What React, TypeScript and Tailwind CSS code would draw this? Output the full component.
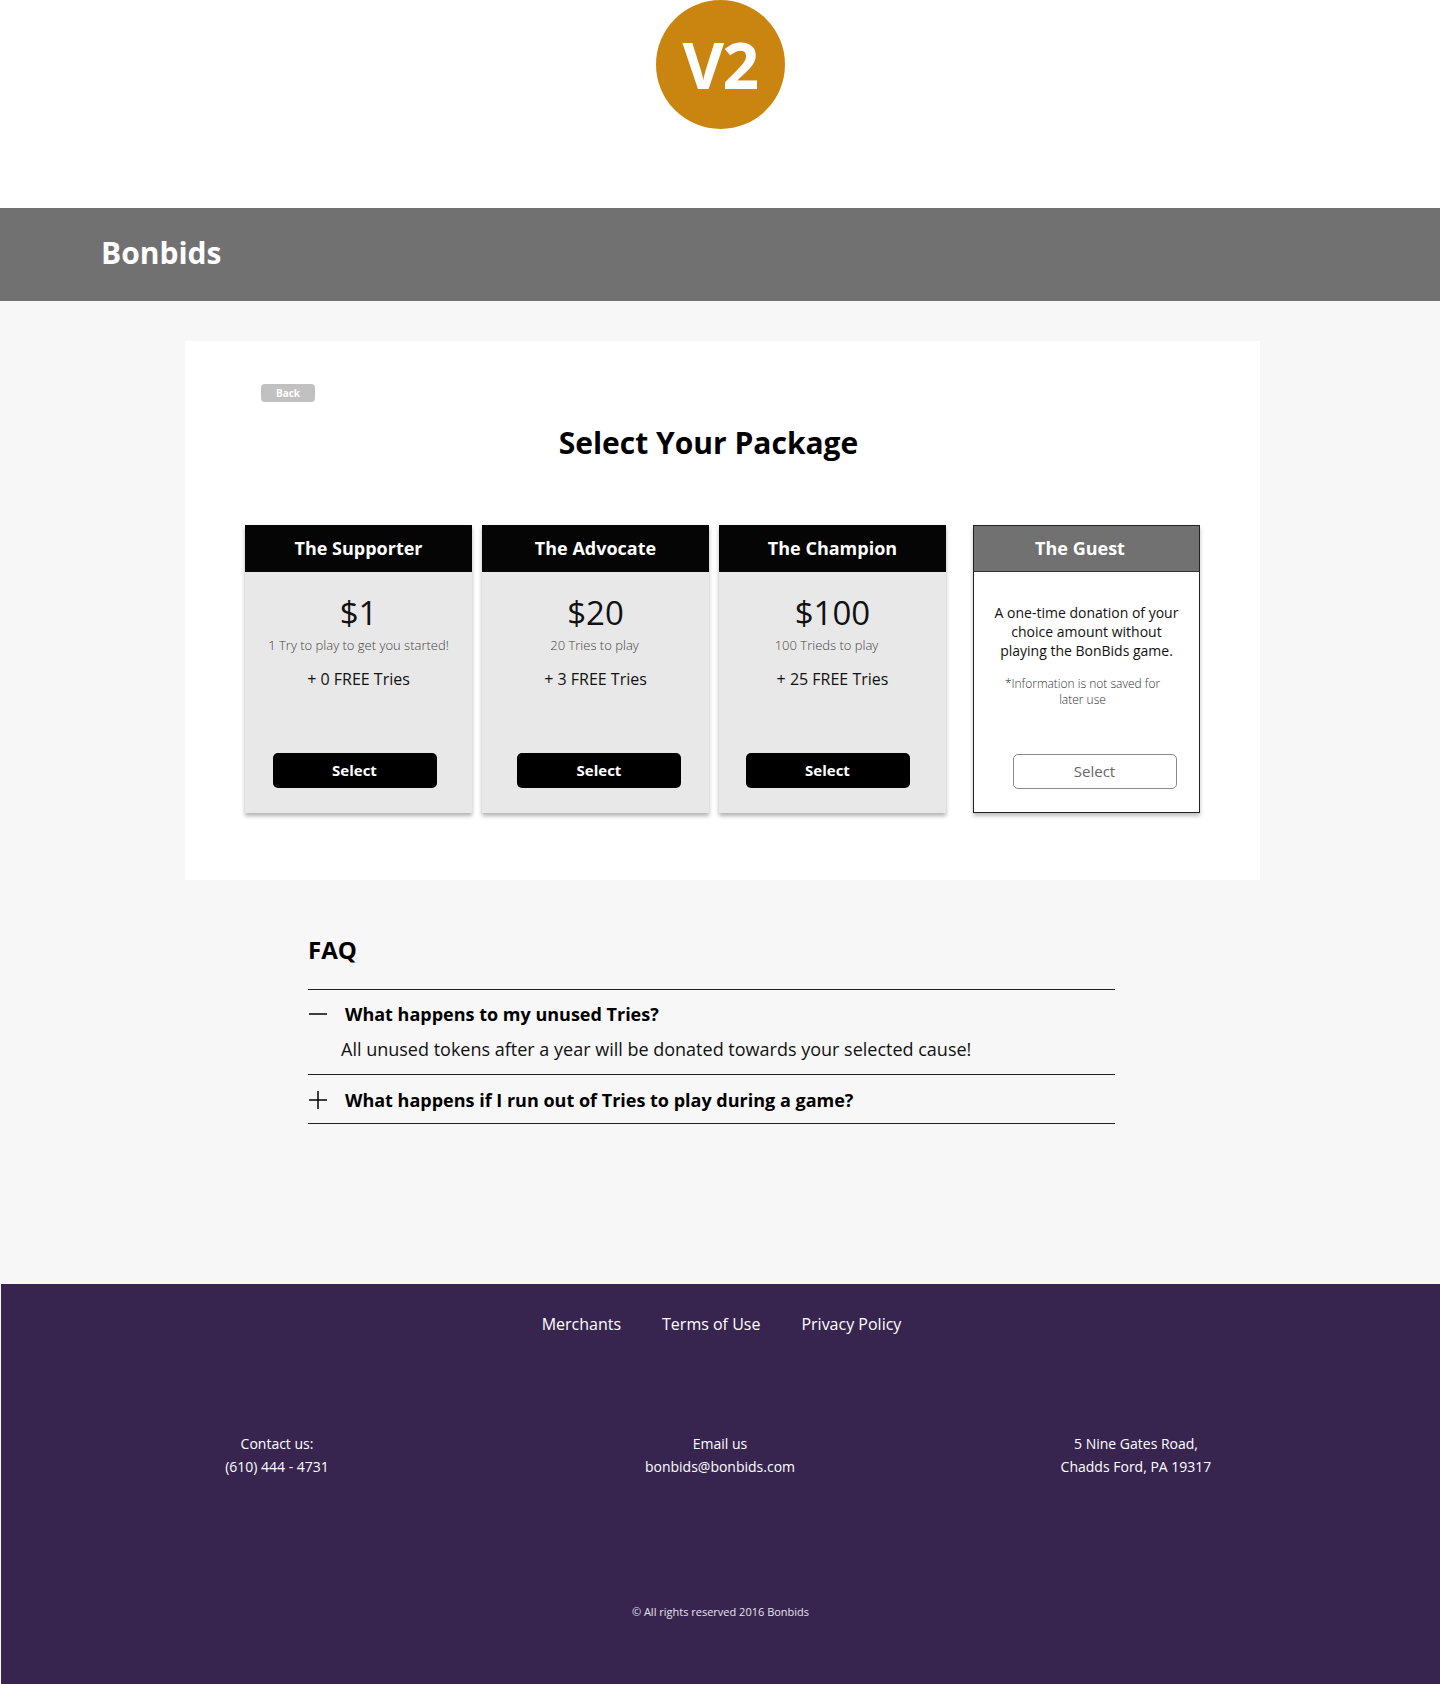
const packages = [
  { name: "The Supporter", price: "$1", tries: "1 Try to play to get you started!", free: "+ 0 FREE Tries", btn: "-ml-[8px]", sub: "" },
  { name: "The Advocate", price: "$20", tries: "20 Tries to play", free: "+ 3 FREE Tries", btn: "ml-[7px]", sub: "-ml-[2px]" },
  { name: "The Champion", price: "$100", tries: "100 Trieds to play", free: "+ 25 FREE Tries", btn: "-ml-[10px]", sub: "-ml-[12px]" },
];

const PackageCard = ({ pkg }: { pkg: (typeof packages)[number] }) => (
  <div className="w-[227px] h-[288px] flex flex-col bg-[#e8e8e8] shadow-[0_3px_4px_rgba(0,0,0,0.3)]">
    <div className="h-[47px] bg-[#050505] flex items-center justify-center text-white font-bold text-[18px]">
      {pkg.name}
    </div>
    <div className="flex-1 flex flex-col items-center pt-[21px] pb-[25px]">
      <div className="text-[33px] leading-[40px] text-[#111]">{pkg.price}</div>
      <div className={`mt-[3px] text-[13px] leading-[18px] font-light text-[#444] ${pkg.sub}`}>{pkg.tries}</div>
      <div className="mt-[14px] text-[16px] leading-[22px] text-[#111]">{pkg.free}</div>
      <button className={`mt-auto w-[164px] h-[35px] rounded-[5px] bg-black text-white font-bold text-[15px] ${pkg.btn}`}>
        Select
      </button>
    </div>
  </div>
);

const MinusIcon = () => (
  <svg width="20" height="20" viewBox="0 0 20 20" className="shrink-0">
    <line x1="1" y1="10" x2="19" y2="10" stroke="black" strokeWidth="1.5" />
  </svg>
);

const PlusIcon = () => (
  <svg width="20" height="20" viewBox="0 0 20 20" className="shrink-0">
    <line x1="1" y1="10" x2="19" y2="10" stroke="black" strokeWidth="1.5" />
    <line x1="10" y1="1" x2="10" y2="19" stroke="black" strokeWidth="1.5" />
  </svg>
);

export default function App() {
  return (
    <div className="min-h-[1684px] flex flex-col bg-[#f7f7f7] font-['Open_Sans',sans-serif]">
      {/* logo strip */}
      <div className="h-[208px] bg-white flex justify-center">
        <div className="w-[129px] h-[129px] rounded-full bg-[#ca8510] flex items-center justify-center text-white font-bold text-[64px] tracking-tight">
          V2
        </div>
      </div>

      {/* header */}
      <div className="h-[93px] bg-[#717171] flex items-center pl-[101px] pb-[4px]">
        <span className="text-white font-bold text-[30px]">Bonbids</span>
      </div>

      {/* packages */}
      <div className="pt-[40px]">
        <div className="ml-[185px] w-[1075px] h-[539px] bg-white pt-[43px] flex flex-col items-center">
          <div className="w-full pl-[76px] flex">
            <button className="w-[54px] h-[18px] rounded-[4px] bg-[#c1c1c1] text-white font-bold text-[10px] leading-[18px]">
              Back
            </button>
          </div>
          <h1 className="mt-[23px] text-[30px] leading-[36px] font-bold text-black -translate-x-[14px]">
            Select Your Package
          </h1>
          <div className="mt-[64px] flex items-start">
            <div className="flex gap-[10px]">
              {packages.map((p) => (
                <PackageCard key={p.name} pkg={p} />
              ))}
            </div>
            <div className="ml-[27px] w-[227px] h-[288px] flex flex-col bg-white border border-[#222] shadow-[0_3px_4px_rgba(0,0,0,0.25)]">
              <div className="h-[46px] bg-[#717171] border-b border-[#333] flex items-center justify-center pr-[13px] text-white font-bold text-[18px]">
                The Guest
              </div>
              <div className="flex-1 flex flex-col items-center pt-[31px] pb-[23px] px-[18px] text-center">
                <div className="text-[14px] leading-[19px] text-[#111]">
                  A one-time donation of your choice amount without playing the BonBids game.
                </div>
                <div className="mt-[16px] -ml-[8px] w-[176px] text-[12px] leading-[16px] font-light text-[#333]">
                  *Information is not saved for later use
                </div>
                <button className="mt-auto ml-[16px] w-[164px] h-[35px] rounded-[5px] border border-[#8a8a8a] bg-white text-[#666] text-[15px]">
                  Select
                </button>
              </div>
            </div>
          </div>
        </div>
      </div>

      {/* FAQ */}
      <div className="ml-[308px] w-[807px] mt-[54px] mb-[160px]">
        <h2 className="text-[24px] leading-[32px] font-bold text-black">FAQ</h2>
        <div className="mt-[23px] border-t border-[#222]">
          <div className="pt-[12px] pb-[12px]">
            <div className="flex items-center h-[24px]">
              <MinusIcon />
              <span className="ml-[17px] text-[18px] font-bold text-black">What happens to my unused Tries?</span>
            </div>
            <p className="mt-[10px] pl-[33px] text-[18px] leading-[26px] text-[#111]">
              All unused tokens after a year will be donated towards your selected cause!
            </p>
          </div>
        </div>
        <div className="border-t border-[#222]">
          <div className="pt-[13px] pb-[11px]">
            <div className="flex items-center h-[24px]">
              <PlusIcon />
              <span className="ml-[17px] text-[18px] font-bold text-black">
                What happens if I run out of Tries to play during a game?
              </span>
            </div>
          </div>
        </div>
        <div className="border-t border-[#222]" />
      </div>

      {/* footer */}
      <footer className="mt-auto ml-[1px] h-[403px] bg-[#37254f] text-white flex flex-col pt-[28px]">
        <div className="flex justify-center gap-[41px] text-[16px] leading-[24px] pl-[2px]">
          <span>Merchants</span>
          <span>Terms of Use</span>
          <span>Privacy Policy</span>
        </div>
        <div className="mt-[96px] grid grid-cols-[552px_334px_498px] text-center text-[14px] leading-[23px]">
          <div>
            <div>Contact us:</div>
            <div>(610) 444 - 4731</div>
          </div>
          <div>
            <div>Email us</div>
            <div>bonbids@bonbids.com</div>
          </div>
          <div>
            <div>5 Nine Gates Road,</div>
            <div>Chadds Ford, PA 19317</div>
          </div>
        </div>
        <div className="mt-[126px] text-center text-[11px] leading-[16px] text-[#e6e3ea]">
          © All rights reserved 2016 Bonbids
        </div>
      </footer>
    </div>
  );
}
